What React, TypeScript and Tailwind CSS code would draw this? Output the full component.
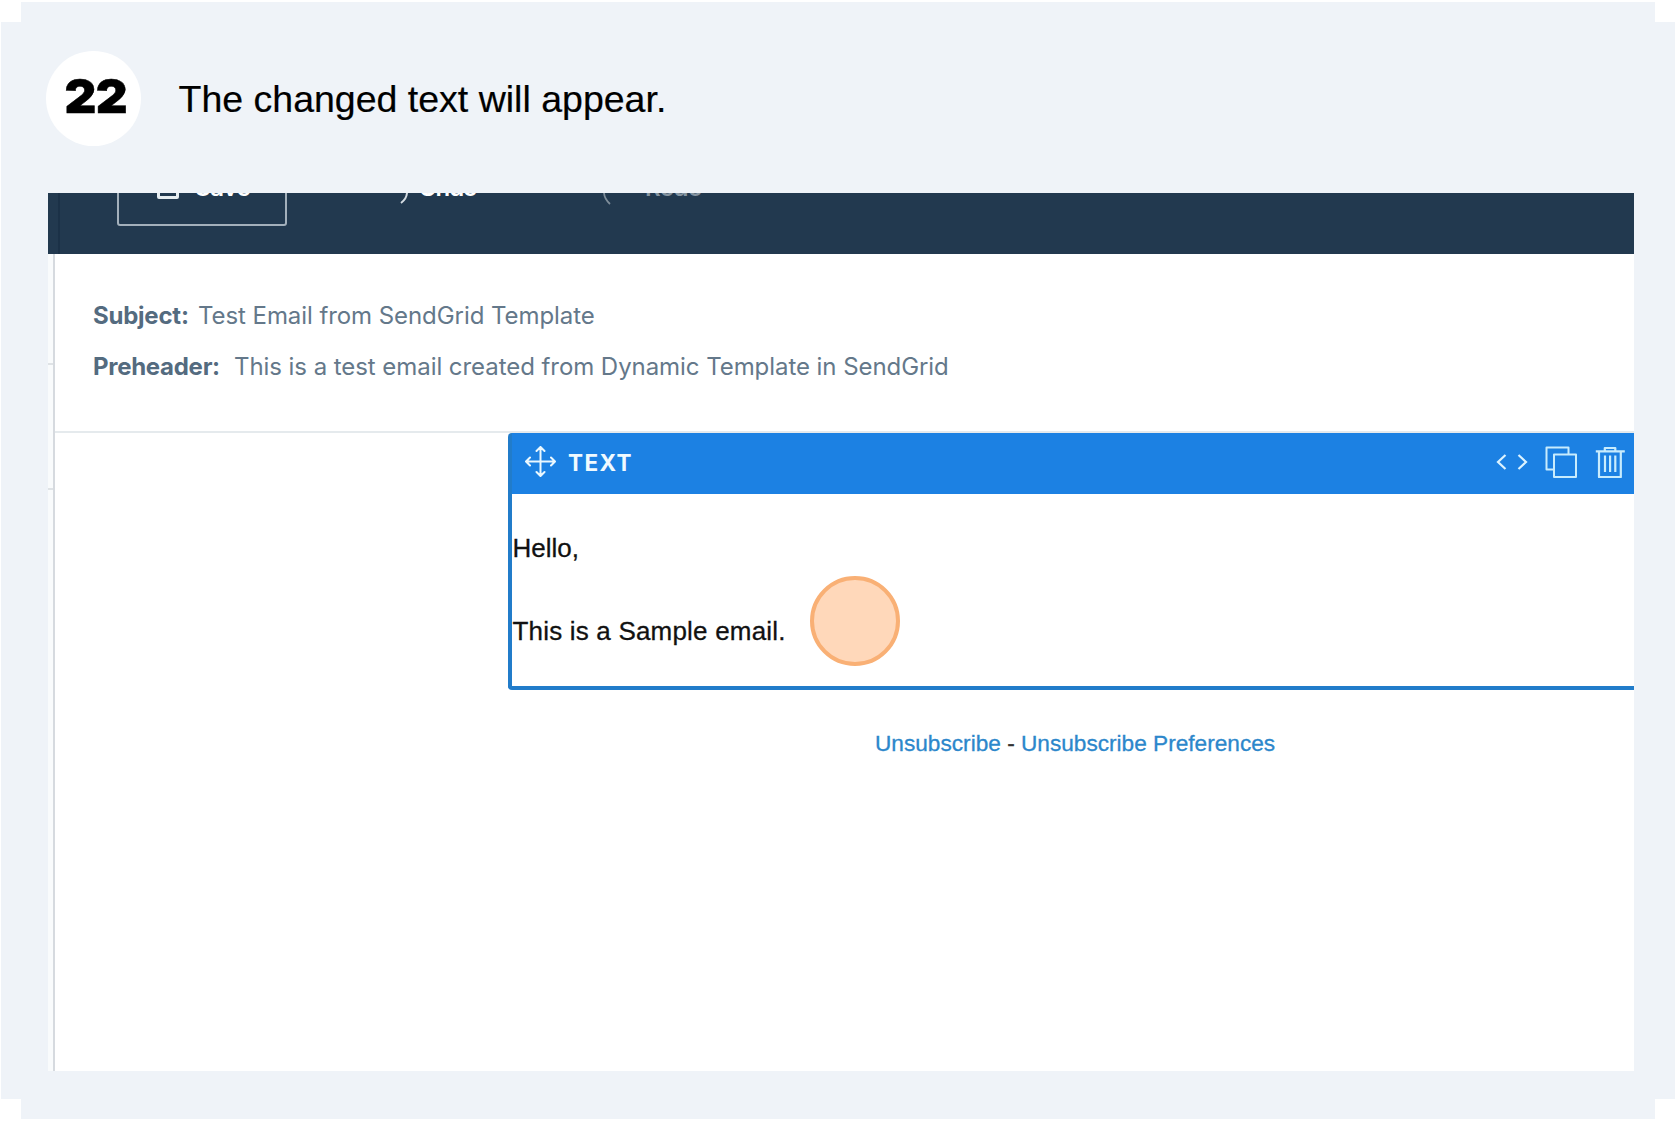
import React from "react";

function MoveIcon() {
  return (
    <svg width="32" height="32" viewBox="0 0 32 32" fill="none" stroke="#eaf8ff" strokeWidth="2" strokeLinecap="round" strokeLinejoin="round">
      <path d="M16.500 1.500v28M2.500 15.500h28M12.500 5l4-4 4 4M12.500 26l4 4 4-4M6 11.500l-4 4 4 4M27 11.500l4 4-4 4" />
    </svg>
  );
}

function CodeIcon() {
  return (
    <svg width="32" height="18" viewBox="0 0 32 18" fill="none" stroke="#dcf3ff" strokeWidth="2.200">
      <path d="M9.500 2L2 9l7.500 7M22.500 2L30 9l-7.500 7" />
    </svg>
  );
}

function CopyIcon() {
  return (
    <svg width="32" height="32" viewBox="0 0 32 32" fill="none" stroke="#c8ecfd" strokeWidth="2" strokeLinejoin="round">
      <path d="M9 23.500H1.500V1.500h22v7" />
      <rect x="9" y="8.500" width="22" height="22.500" />
    </svg>
  );
}

function TrashIcon() {
  return (
    <svg width="30" height="32" viewBox="0 0 30 32" fill="none" stroke="#c8ecfd" strokeWidth="2.200" strokeLinejoin="round">
      <path d="M.8 5.300h29M9.800 5V2h10.500v3M4 5.500V31h21.800V5.500M10 9.500v16.500M15.100 9.500v16.500M20.300 9.500v16.500" />
    </svg>
  );
}

function Toolbar() {
  return (
    <div className="flex h-[61px] shrink-0 overflow-hidden bg-[#22394f] pl-[10px] text-[24px] font-semibold leading-[28px] text-white">
      <div className="h-full w-[2px] bg-[#1b3147]" />
      <div className="-mt-[26px] ml-[57px] flex h-[59px] w-[170px] shrink-0 rounded-[3px] border-2 border-[#a3b0bb] pl-[38px] pt-[1px]">
        <div className="mt-[6px] h-[23px] w-[22px] rounded-[2px] border-[3px] border-[#e6edf1]" />
        <div className="ml-[16px] mt-[4px] font-['Inter'] tracking-[-0.4px]">Save</div>
      </div>
      <svg className="ml-[112px] shrink-0" width="10" height="12" viewBox="0 0 10 12" fill="none" stroke="#d5dce2" strokeWidth="2">
        <path d="M8 0Q7.500 6 2 10" />
      </svg>
      <div className="-mt-[19px] ml-[10px] w-[61px] font-['Inter'] tracking-[-1.1px]">Undo</div>
      <svg className="ml-[122px] shrink-0" width="10" height="12" viewBox="0 0 10 12" fill="none" stroke="#7f8e9b" strokeWidth="1.800">
        <path d="M2 0Q2.500 6 8 11" />
      </svg>
      <div className="-mt-[19px] ml-[33px] font-['Inter'] tracking-[-0.5px] text-[#8594a1]">Redo</div>
    </div>
  );
}

function EditorCanvas() {
  return (
    <div className="flex min-h-0 flex-1 bg-white">
      <div className="flex w-[5px] shrink-0 flex-col bg-[#f9fbfc]">
        <div className="mt-[109px] h-[2px] bg-[#dfe3e6]" />
        <div className="mt-[123px] h-[2px] bg-[#dfe3e6]" />
      </div>
      <div className="w-[2px] shrink-0 bg-[#d6dadf]" />
      <div className="flex min-w-0 flex-1 flex-col">
        <div className="h-[179px] shrink-0 border-b-2 border-[#e5eaed] pl-[38px] pt-[42px] font-['Inter'] text-[24px] leading-[40px] text-[#64788a]">
          <div className="flex">
            <span className="w-[105px] whitespace-nowrap font-bold tracking-[-0.23px] text-[#546b7f]">Subject:</span>
            <span className="whitespace-nowrap tracking-[-0.07px]">Test Email from SendGrid Template</span>
          </div>
          <div className="mt-[11px] flex">
            <span className="w-[141px] whitespace-nowrap font-bold tracking-[-0.28px] text-[#546b7f]">Preheader:</span>
            <span className="whitespace-nowrap tracking-[-0.06px]">This is a test email created from Dynamic Template in SendGrid</span>
          </div>
        </div>
        <div className="ml-[453px] flex h-[257px] shrink-0 flex-col overflow-hidden rounded-l-[4px] border-b-4 border-l-4 border-[#217cca]">
          <div className="-ml-1 flex h-[61px] shrink-0 items-center bg-[#1c81e3] pl-[16px] pr-[9px]">
            <div className="-mt-[4px]"><MoveIcon /></div>
            <div className="-mt-[2px] ml-[12px] font-['Inter'] text-[22.5px] font-bold tracking-[1.4px] text-[#f0faff]">TEXT</div>
            <div className="-mt-[3px] ml-auto flex items-center">
              <CodeIcon />
              <div className="ml-[17px]"><CopyIcon /></div>
              <div className="ml-[18px]"><TrashIcon /></div>
            </div>
          </div>
          <div className="relative pl-[0.5px] pt-[39px] text-[26px] leading-[30px] text-[#111] [-webkit-text-stroke:0.3px]">
            <p className="whitespace-nowrap">Hello,</p>
            <p className="mt-[53px] whitespace-nowrap tracking-[0.19px]">This is a Sample email.</p>
            <div className="absolute left-[297.5px] top-[81.5px] size-[90px] rounded-full border-4 border-[#f9b075] bg-[#ffd8ba]" />
          </div>
        </div>
        <p className="ml-[820px] mt-[39px] whitespace-nowrap text-[22.65px] leading-[28px] text-[#333] [-webkit-text-stroke:0.3px]">
          <a className="text-[#2c87cb]">Unsubscribe</a> - <a className="text-[#2c87cb]">Unsubscribe Preferences</a>
        </p>
      </div>
    </div>
  );
}

export default function App() {
  return (
    <div className="h-[1123px] w-[1680px] overflow-hidden bg-white pl-px pt-[2px] font-['Liberation_Sans',Arial,sans-serif]">
      <div className="relative flex h-[1117px] w-[1674px] flex-col bg-[#eff3f8]">
        <div className="absolute left-0 top-0 size-[20px] bg-white" />
        <div className="absolute right-0 top-0 size-[20px] bg-white" />
        <div className="absolute bottom-0 left-0 size-[20px] bg-white" />
        <div className="absolute bottom-0 right-0 size-[20px] bg-white" />
        <header className="flex h-[191px] shrink-0 pl-[44.5px] pt-[48.5px]">
          <div className="flex size-[95px] shrink-0 items-center justify-center rounded-full bg-white pb-[6px] pl-[5px] font-['Inter'] text-[47px] font-black leading-none tracking-[-0.6px] text-black">
            <span className="scale-x-105 [-webkit-text-stroke:0.5px]">22</span>
          </div>
          <h1 className="ml-[38px] mt-[26.5px] whitespace-nowrap text-[37.5px] leading-[44px] text-black [-webkit-text-stroke:0.2px]">The changed text will appear.</h1>
        </header>
        <main className="ml-[47px] flex h-[878px] w-[1586px] flex-col overflow-hidden">
          <Toolbar />
          <EditorCanvas />
        </main>
      </div>
    </div>
  );
}
